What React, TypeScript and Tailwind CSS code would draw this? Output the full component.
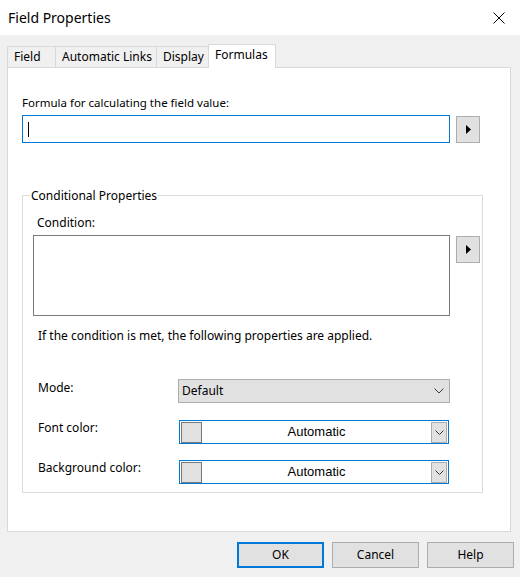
import React from 'react';

const ArrowButton: React.FC<{ className?: string }> = ({ className = '' }) => (
  <div
    className={`flex h-[27px] w-[24px] shrink-0 items-center justify-center border border-[#adadad] bg-[#e1e1e1] ${className}`}
  >
    <svg width="5" height="9" viewBox="0 0 5 9">
      <path d="M0 0 L5 4.5 L0 9 Z" fill="#000" />
    </svg>
  </div>
);

const Chevron: React.FC = () => (
  <svg width="10" height="6" viewBox="0 0 10 6">
    <polyline points="0.5,0.5 5,5 9.5,0.5" fill="none" stroke="#3c3c3c" strokeWidth="1" />
  </svg>
);

const ColorCombo: React.FC<{ value: string }> = ({ value }) => (
  <div className="mt-[1px] ml-[1px] flex h-[24px] w-[270px] items-center border border-[#0078d7] bg-white pl-[1px] pr-[1px]">
    <div className="h-[21px] w-[21px] shrink-0 border border-[#7a7a7a] bg-[#e1e1e1]" />
    <div className="flex-1 text-center font-['Liberation_Sans',Arial,sans-serif] text-[13px] leading-[16px] text-black">
      {value}
    </div>
    <div className="flex h-[21px] w-[16px] shrink-0 items-center justify-center border border-[#adadad] bg-[#e1e1e1]">
      <svg width="9" height="5" viewBox="0 0 9 5">
        <polyline points="0.5,0.5 4.5,4.5 8.5,0.5" fill="none" stroke="#3c3c3c" strokeWidth="1" />
      </svg>
    </div>
  </div>
);

const tabs = [
  { label: 'Field', width: 'w-[48px]' },
  { label: 'Automatic Links', width: 'w-[101px]' },
  { label: 'Display', width: 'w-[52px]' },
];

export default function App() {
  return (
    <div className="flex h-[577px] w-[520px] flex-col bg-[#f0f0f0] font-['Noto_Sans','Segoe_UI',sans-serif] text-[12px] leading-[16px] text-black">
      {/* title bar */}
      <div className="flex h-[35px] shrink-0 items-center justify-between bg-white pl-[8px] pr-[15px]">
        <span className="text-[14px] leading-[20px] text-black">Field Properties</span>
        <svg width="12" height="12" viewBox="0 0 12 12">
          <path d="M0.5 0.5 L11.5 11.5 M11.5 0.5 L0.5 11.5" stroke="#000" strokeWidth="1" />
        </svg>
      </div>

      {/* tab strip */}
      <div className="mt-[9px] flex h-[23px] items-end pl-[7px]">
        {tabs.map((t) => (
          <div
            key={t.label}
            className={`h-[21px] ${t.width} border-l border-t border-[#d9d9d9] bg-[#f0f0f0] pl-[6px] pt-[2px] whitespace-nowrap`}
          >
            {t.label}
          </div>
        ))}
        <div className="relative z-10 -mb-[1px] h-[24px] w-[68px] border-x border-t border-[#d9d9d9] bg-white pl-[6px] pt-[2px]">
          Formulas
        </div>
      </div>

      {/* tab page */}
      <div className="ml-[7px] h-[465px] w-[504px] border border-[#d9d9d9] bg-white">
        <div className="ml-[14px] mt-[27px] text-[11.5px]">Formula for calculating the field value:</div>
        <div className="mt-[4px] flex items-start">
          <div className="ml-[14px] flex h-[28px] w-[428px] items-center border border-[#0078d7] bg-white pl-[5px]">
            <span className="h-[15px] w-px bg-black" />
          </div>
          <ArrowButton className="ml-[6px] mt-[1px]" />
        </div>

        {/* conditional properties group */}
        <div className="relative ml-[14px] mt-[52px] h-[298px] w-[461px] border border-[#dcdcdc]">
          <span className="absolute -top-[8px] left-[7px] bg-white px-[1px]">Conditional Properties</span>

          <div className="ml-[14px] pt-[19px]">Condition:</div>
          <div className="mt-[4px] flex items-start">
            <div className="ml-[10px] h-[81px] w-[417px] border border-[#7a7a7a] bg-white" />
            <ArrowButton className="ml-[6px] mt-[1px]" />
          </div>

          <div className="ml-[15px] mt-[12px]">If the condition is met, the following properties are applied.</div>

          <div className="mt-[35px] flex items-start">
            <div className="ml-[15px] w-[140px] pt-[1px]">Mode:</div>
            <div className="flex h-[24px] w-[272px] items-center justify-between border border-[#adadad] bg-[#e1e1e1] pl-[3px] pr-[5px]">
              <span>Default</span>
              <Chevron />
            </div>
          </div>

          <div className="mt-[16px] flex items-start">
            <div className="ml-[15px] w-[140px] pt-[1px]">Font color:</div>
            <ColorCombo value="Automatic" />
          </div>

          <div className="mt-[15px] flex items-start">
            <div className="ml-[15px] w-[140px] pt-[1px]">Background color:</div>
            <ColorCombo value="Automatic" />
          </div>
        </div>
      </div>

      {/* dialog buttons */}
      <div className="mt-[10px] flex justify-end gap-[8px] pr-[6px]">
        <button className="h-[26px] w-[87px] border-2 border-[#0078d7] bg-[#e1e1e1]">OK</button>
        <button className="h-[26px] w-[87px] border border-[#adadad] bg-[#e1e1e1]">Cancel</button>
        <button className="h-[26px] w-[87px] border border-[#adadad] bg-[#e1e1e1]">Help</button>
      </div>
    </div>
  );
}
